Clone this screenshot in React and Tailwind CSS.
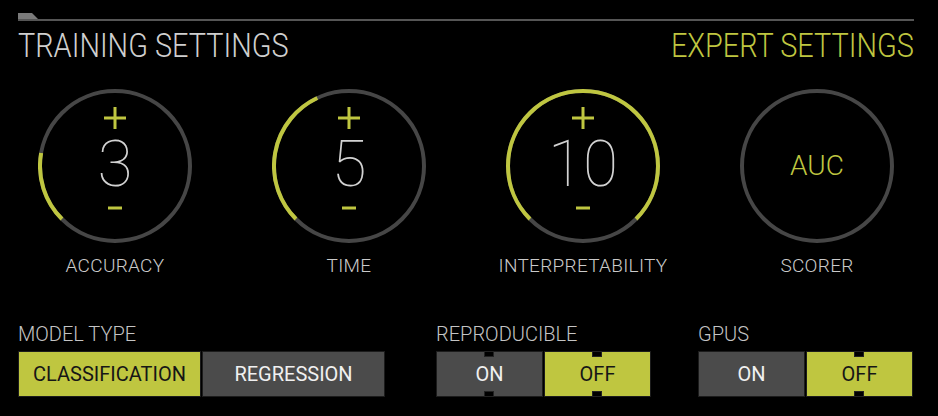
import React from 'react';

const GREEN = '#bfc640';

function pt(a) {
  const r = (a * Math.PI) / 180;
  return [77 + 75 * Math.sin(r), 77 - 75 * Math.cos(r)];
}

function arcPath(from, to) {
  const [x1, y1] = pt(from);
  const [x2, y2] = pt(to);
  const large = to - from > 180 ? 1 : 0;
  return `M ${x1} ${y1} A 75 75 0 ${large} 1 ${x2} ${y2}`;
}

function Dial({ label, value, to, text }) {
  return (
    <div className="flex w-[154px] flex-col items-center">
      <div className="relative h-[154px] w-[154px]">
        <svg className="absolute inset-0" width="154" height="154" viewBox="0 0 154 154">
          <circle cx="77" cy="77" r="75" fill="none" stroke="#464646" strokeWidth="4" />
          {to && <path d={arcPath(225, to)} fill="none" stroke={GREEN} strokeWidth="4" />}
        </svg>
        {text ? (
          <div className="absolute inset-0 flex items-center justify-center text-[28px] text-[#bfc640]">{text}</div>
        ) : (
          <>
            <svg className="absolute left-[66px] top-[18px]" width="22" height="22" viewBox="0 0 22 22">
              <path d="M0 11 H22 M11 0 V22" stroke={GREEN} strokeWidth="3" />
            </svg>
            <div className="absolute inset-x-0 top-[46px] text-center text-[64px] font-thin leading-[60px] text-[#d2d2d2]">{value}</div>
            <svg className="absolute left-[70px] top-[117px]" width="14" height="4" viewBox="0 0 14 4">
              <path d="M0 2 H14" stroke={GREEN} strokeWidth="3" />
            </svg>
          </>
        )}
      </div>
      <div className="mt-3 whitespace-nowrap text-[19px] leading-[22px] tracking-[0.3px] text-[#cacaca]">{label}</div>
    </div>
  );
}

function Notch({ left }) {
  return (
    <>
      <div className="absolute top-[-1px] h-[6px] w-[10px] border border-[#222] bg-black" style={{ left }} />
      <div className="absolute bottom-[-1px] h-[6px] w-[10px] border border-[#222] bg-black" style={{ left }} />
    </>
  );
}

function Btn({ label, on, w, notch }) {
  return (
    <div
      className={
        'relative flex h-[46px] items-center justify-center border border-[#1c1c1c] text-[20px] font-normal ' +
        (on ? 'bg-[#bfc640] text-[#161616]' : 'bg-[#4b4b4b] text-[#f0f0f0]')
      }
      style={{ width: w }}
    >
      {label}
      {notch && <Notch left={47} />}
    </div>
  );
}

function Group({ title, children }) {
  return (
    <div className="flex flex-col">
      <div className="text-[20px] leading-[24px] text-[#c4c4c4]">{title}</div>
      <div className="mt-[5px] flex gap-[1px]">{children}</div>
    </div>
  );
}

export default function App() {
  return (
    <div className="h-[416px] w-[938px] overflow-hidden bg-black pt-[13px] font-['Roboto',sans-serif] font-light">
      <div className="mx-[18px] w-[896px]">
        <div className="h-[6px] w-[20px] bg-[#7a7a7a] [clip-path:polygon(0_0,70%_0,100%_100%,0_100%)]" />
        <div className="h-[2px] bg-[#555]" />
        <div className="mt-[4px] flex items-center justify-between whitespace-nowrap text-[34px] leading-[40px]">
          <span className="inline-block origin-left scale-x-[0.85] text-[#cfcfcf]">TRAINING SETTINGS</span>
          <span className="inline-block origin-right scale-x-[0.85] text-[#bfc640]">EXPERT SETTINGS</span>
        </div>
      </div>

      <div className="mt-[24px] flex gap-[80px] pl-[38px]">
        <Dial label="ACCURACY" value="3" to={280} />
        <Dial label="TIME" value="5" to={335} />
        <Dial label="INTERPRETABILITY" value="10" to={495} />
        <Dial label="SCORER" text="AUC" />
      </div>

      <div className="mt-[45px] flex pl-[18px]">
        <Group title="MODEL TYPE">
          <Btn label="CLASSIFICATION" on w={183} />
          <Btn label="REGRESSION" w={183} />
        </Group>
        <div className="ml-[51px]">
          <Group title="REPRODUCIBLE">
            <Btn label="ON" w={107} notch />
            <Btn label="OFF" on w={107} notch />
          </Group>
        </div>
        <div className="ml-[47px]">
          <Group title="GPUS">
            <Btn label="ON" w={107} />
            <Btn label="OFF" on w={107} notch />
          </Group>
        </div>
      </div>
    </div>
  );
}
